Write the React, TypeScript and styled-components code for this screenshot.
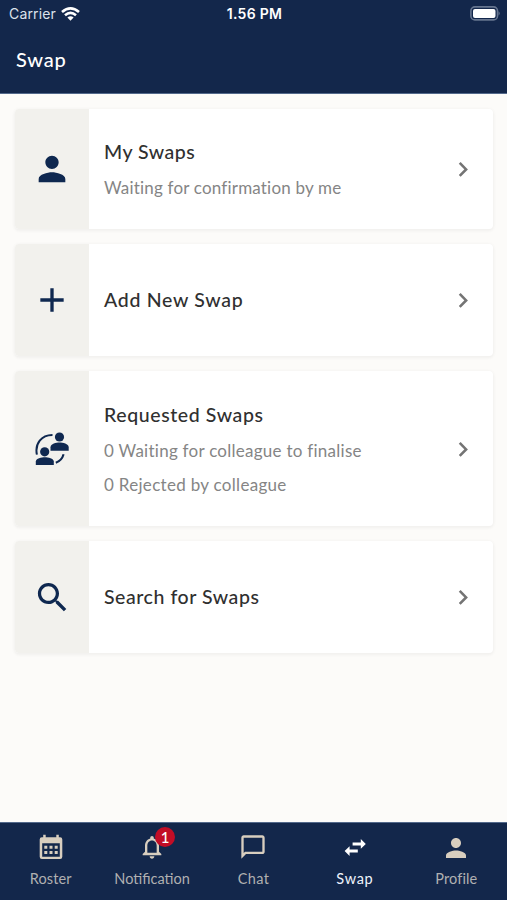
import React from "react";
import styled, { createGlobalStyle } from "styled-components";

const navy = "#13274b";
const ink = "#0f2850";

const GlobalStyle = createGlobalStyle`
  * { box-sizing: border-box; }
  body { margin: 0; background: #fcfbf9; font-family: Lato, "Open Sans", sans-serif; }
`;

const Screen = styled.div`
  display: flex;
  flex-direction: column;
  width: 507px;
  height: 900px;
  overflow: hidden;
  background: #fcfbf9;
`;

const Header = styled.header`
  display: flex;
  flex-direction: column;
  height: 94px;
  flex: none;
  background: ${navy};
  border-bottom: 1px solid #53698b;
  color: #fff;
`;

const StatusBar = styled.div`
  display: grid;
  grid-template-columns: 1fr auto 1fr;
  align-items: center;
  height: 27px;
  padding: 0 7px 0 9px;
  font-family: Inter, sans-serif;
  font-size: 14px;
  line-height: 27px;
`;

const Carrier = styled.div`
  display: flex;
  align-items: center;
  gap: 5px;
  color: #dce2ec;
  letter-spacing: 0.15px;
`;

const Clock = styled.div`
  font-weight: 600;
  font-size: 14px;
  letter-spacing: 0.3px;
`;

const BatterySlot = styled.div`
  display: flex;
  justify-content: flex-end;
  margin-right: -1px;
`;

const Title = styled.h1`
  margin: 0;
  padding: 18px 16px 0;
  font-size: 20px;
  font-weight: 500;
  line-height: 28px;
  letter-spacing: 0.8px;
`;

const List = styled.main`
  display: flex;
  flex-direction: column;
  flex: 1;
  gap: 15px;
  padding: 15px 14px 0 15px;
`;

const Card = styled.section<{ $height: number }>`
  display: flex;
  flex: none;
  height: ${(p) => p.$height}px;
  background: #fff;
  border-radius: 4px;
  overflow: hidden;
  box-shadow: 0 1px 3px 1px rgba(60, 60, 60, 0.06);
`;

const Tile = styled.div`
  display: flex;
  align-items: center;
  justify-content: center;
  width: 74px;
  background: #f2f1ed;
`;

const CardBody = styled.div<{ $top: number }>`
  display: flex;
  flex: 1;
  flex-direction: column;
  justify-content: center;
  padding: ${(p) => p.$top}px 0 0 15px;
  white-space: nowrap;
`;

const CardTitle = styled.h2<{ $spacing: number }>`
  margin: 0;
  color: #303030;
  font-size: 19.5px;
  font-weight: 500;
  line-height: 36px;
  letter-spacing: ${(p) => p.$spacing}px;
`;

const CardLine = styled.p<{ $spacing: number }>`
  margin: 0;
  color: #858585;
  font-size: 17px;
  line-height: 34px;
  letter-spacing: ${(p) => p.$spacing}px;
  &:first-of-type { margin-top: 1px; }
`;

const Arrow = styled.div`
  display: flex;
  align-items: center;
  padding-right: 15px;
`;

const TabBar = styled.nav`
  display: grid;
  grid-template-columns: repeat(5, 1fr);
  height: 78px;
  flex: none;
  background: ${navy};
  border-top: 1px solid #53698b;
`;

const Tab = styled.div<{ $active?: boolean; $spacing: number }>`
  display: flex;
  flex-direction: column;
  align-items: center;
  padding-top: 10px;
  gap: 8px;
  color: ${(p) => (p.$active ? "#fff" : "#d8cebf")};
  span {
    color: ${(p) => (p.$active ? "#eef3fb" : "#b0b0b1")};
    font-size: 14.5px;
    line-height: 20px;
    letter-spacing: ${(p) => p.$spacing}px;
  }
`;

const IconSlot = styled.div`
  position: relative;
  display: flex;
  height: 28px;
`;

const Badge = styled.b`
  position: absolute;
  left: 17px;
  top: -6px;
  width: 20px;
  height: 20px;
  border-radius: 50%;
  background: #c20d26;
  color: #fff;
  font-size: 15px;
  font-weight: 500;
  line-height: 20px;
  text-align: center;
`;

const paths = {
  person: "M12 12c2.21 0 4-1.79 4-4s-1.79-4-4-4-4 1.79-4 4 1.79 4 4 4zm0 2c-2.67 0-8 1.34-8 4v2h16v-2c0-2.66-5.33-4-8-4z",
  plus: "M19 13h-6v6h-2v-6H5v-2h6V5h2v6h6v2z",
  search: "M15.5 14h-.79l-.28-.27C15.41 12.59 16 11.11 16 9.5 16 5.91 13.09 3 9.5 3S3 5.91 3 9.5 5.91 16 9.5 16c1.61 0 3.09-.59 4.23-1.57l.27.28v.79l5 4.99L20.49 19l-4.99-5zm-6 0C7.01 14 5 11.99 5 9.5S7.01 5 9.5 5 14 7.01 14 9.5 11.99 14 9.5 14z",
  bell: "M12 22c1.1 0 2-.9 2-2h-4c0 1.1.89 2 2 2zm6-6v-5c0-3.07-1.64-5.64-4.5-6.32V4c0-.83-.67-1.5-1.5-1.5s-1.5.67-1.5 1.5v.68C7.63 5.36 6 7.92 6 11v5l-2 2v1h16v-1l-2-2zm-2 1H8v-6c0-2.48 1.51-4.5 4-4.5s4 2.02 4 4.5v6z",
  chat: "M20 2H4c-1.1 0-2 .9-2 2v18l4-4h14c1.1 0 2-.9 2-2V4c0-1.1-.9-2-2-2zm0 14H5.17L4 17.17V4h16v12z",
};

const Glyph = ({ d, size, color = "currentColor" }: { d: string; size: number; color?: string }) => (
  <svg width={size} height={size} viewBox="0 0 24 24" fill={color}>
    <path d={d} />
  </svg>
);

const WifiIcon = () => (
  <svg width="19" height="14" viewBox="0 0 19 14" fill="none" stroke="#fff" strokeWidth="2.6">
    <path d="M1 5.1Q9.5-2.2 18 5.1M4 8.3Q9.5 3.5 15 8.3" />
    <path d="M9.5 13.7 6.4 10.6Q9.5 8 12.6 10.6Z" fill="#fff" stroke="none" />
  </svg>
);

const BatteryIcon = () => (
  <svg width="31" height="15" viewBox="0 0 31 15">
    <rect x=".9" y=".9" width="26.6" height="13" rx="4" fill="none" stroke="#66758f" strokeWidth="1.6" />
    <rect x="3" y="2.9" width="22.5" height="9" rx="2" fill="#fff" />
    <path d="M28.6 5.2q2 2.2 0 4.4z" fill="#7886a0" />
  </svg>
);

const PeopleIcon = () => (
  <svg width="34" height="34" viewBox="0 0 34 34" fill={ink}>
    <path d="M1.9 22.6C-.4 11.5 6.5 2.8 17.5 2.9" fill="none" stroke={ink} strokeWidth="2" />
    <path d="M28.6 22.2Q26.8 28.6 20.8 30.7" fill="none" stroke={ink} strokeWidth="2.1" />
    <circle cx="24.5" cy="5" r="4.6" />
    <path d="M15.5 18.7v-3.5c0-3.4 5.8-4.6 9-4.6s9.2 1.2 9.2 4.6v3.5z" />
    <circle cx="9.7" cy="19.8" r="4.6" />
    <path d="M.8 33v-3.4c0-3.3 5.8-4.4 9-4.4s9 1.1 9 4.4V33z" />
  </svg>
);

const CalendarIcon = () => (
  <svg width="28" height="28" viewBox="0 0 28 28">
    <path
      fill="currentColor"
      fillRule="evenodd"
      d="M6.2 1.7h2.5v2.5h10.6V1.7h2.5v2.5h1.3q2.2 0 2.2 2.2v17.3q0 2.3-2.2 2.3H4.9q-2.2 0-2.2-2.3V6.4q0-2.2 2.2-2.2h1.3zM5.2 10.3v13.4h17.6V10.3z"
    />
    <path fill="currentColor" d="M7.3 12.8h3v3h-3zm5.2 0h3v3h-3zm5.2 0h3v3h-3zM7.3 18h3v3h-3zm5.2 0h3v3h-3zm5.2 0h3v3h-3z" />
  </svg>
);

const SwapIcon = () => (
  <svg width="28" height="28" viewBox="0 0 28 28" fill="currentColor">
    <path d="M11.6 9.4h8.2V6l5 4.9-5 4.9v-3.4h-8.2zM16.8 16.6H8.6v-3.4l-5 4.9 5 4.9v-3.4h8.2z" />
  </svg>
);

const Chevron = () => (
  <svg width="28" height="28" viewBox="0 0 28 28" fill="none" stroke="#747474" strokeWidth="2.6">
    <path d="m9.7 7.9 6.4 6.5-6.4 6.5" />
  </svg>
);

const cards = [
  { title: "My Swaps", ts: 0.5, top: 0, height: 120, icon: <Glyph d={paths.person} size={40} color={ink} />, lines: [["Waiting for confirmation by me", 0.19]] },
  { title: "Add New Swap", ts: 0.7, top: 0, height: 112, icon: <Glyph d={paths.plus} size={40} color={ink} />, lines: [] },
  { title: "Requested Swaps", ts: 0.6, top: 2, height: 155, icon: <PeopleIcon />, lines: [["0 Waiting for colleague to finalise", 0.26], ["0 Rejected by colleague", 0.3]] },
  { title: "Search for Swaps", ts: 0.55, top: 0, height: 112, icon: <Glyph d={paths.search} size={39} color={ink} />, lines: [] },
] as { title: string; ts: number; top: number; height: number; icon: React.ReactNode; lines: [string, number][] }[];

const tabs = [
  { label: "Roster", spacing: 0.1, icon: <CalendarIcon /> },
  { label: "Notification", spacing: 0, icon: <Glyph d={paths.bell} size={28} />, badge: 1 },
  { label: "Chat", spacing: 0.3, icon: <Glyph d={paths.chat} size={28} /> },
  { label: "Swap", spacing: 0.7, icon: <SwapIcon />, active: true },
  { label: "Profile", spacing: 0.1, icon: <Glyph d={paths.person} size={30} /> },
];

export default function App() {
  return (
    <Screen>
      <GlobalStyle />
      <Header>
        <StatusBar>
          <Carrier>Carrier <WifiIcon /></Carrier>
          <Clock>1.56 PM</Clock>
          <BatterySlot><BatteryIcon /></BatterySlot>
        </StatusBar>
        <Title>Swap</Title>
      </Header>
      <List>
        {cards.map((card) => (
          <Card key={card.title} $height={card.height}>
            <Tile>{card.icon}</Tile>
            <CardBody $top={card.top}>
              <CardTitle $spacing={card.ts}>{card.title}</CardTitle>
              {card.lines.map(([text, spacing]) => (
                <CardLine key={text} $spacing={spacing}>{text}</CardLine>
              ))}
            </CardBody>
            <Arrow><Chevron /></Arrow>
          </Card>
        ))}
      </List>
      <TabBar>
        {tabs.map((tab) => (
          <Tab key={tab.label} $active={tab.active} $spacing={tab.spacing}>
            <IconSlot>
              {tab.icon}
              {tab.badge && <Badge>{tab.badge}</Badge>}
            </IconSlot>
            <span>{tab.label}</span>
          </Tab>
        ))}
      </TabBar>
    </Screen>
  );
}
